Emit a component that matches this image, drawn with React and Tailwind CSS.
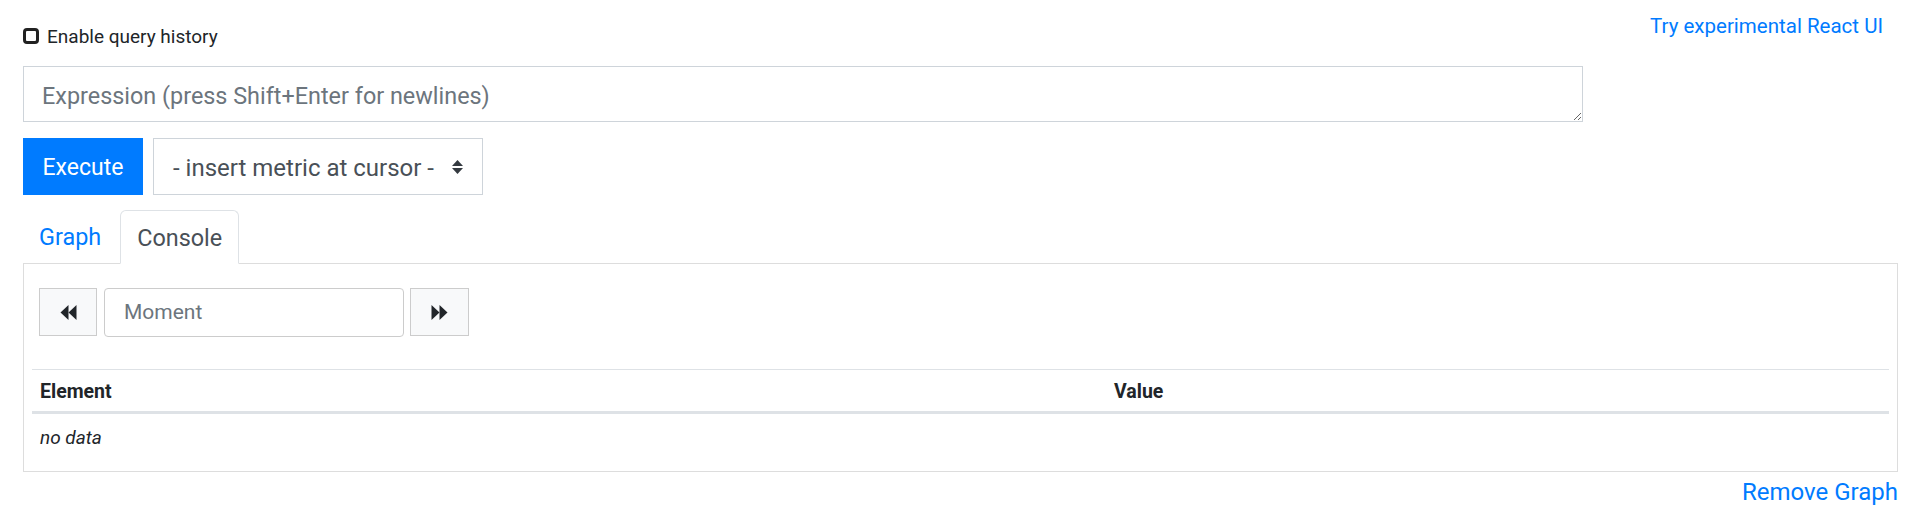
import React from "react";

function BackIcon() {
  return (
    <svg width="17" height="15" viewBox="0 0 17 15" fill="#212529">
      <path d="M8.5 0 L0.5 7.5 L8.5 15 Z" />
      <path d="M16.5 0 L8.5 7.5 L16.5 15 Z" />
    </svg>
  );
}

function FwdIcon() {
  return (
    <svg width="17" height="15" viewBox="0 0 17 15" fill="#212529">
      <path d="M0.5 0 L8.5 7.5 L0.5 15 Z" />
      <path d="M8.5 0 L16.5 7.5 L8.5 15 Z" />
    </svg>
  );
}

function SortIcon() {
  return (
    <svg width="11" height="14" viewBox="0 0 11 14" fill="#343a40">
      <path d="M5.5 0 L11 6 L0 6 Z" />
      <path d="M0 8 L11 8 L5.5 14 Z" />
    </svg>
  );
}

export default function App() {
  return (
    <div className="w-[1920px] h-[509px] bg-white pl-[23px] pr-[22px] font-['Roboto','Liberation_Sans',sans-serif] text-[#212529] overflow-hidden">
      {/* top row */}
      <div className="flex justify-between items-start">
        <div className="mt-[28px] flex items-center h-[16px] gap-[8px]">
          <div className="w-[16px] h-[16px] border-[3px] border-[#222] rounded-[4px] bg-white" />
          <span className="text-[19px] leading-[16px] pt-[1px]">Enable query history</span>
        </div>
        <a className="mt-[13px] mr-[15px] text-[20.5px] leading-[26px] text-[#007bff]">
          Try experimental React UI
        </a>
      </div>

      {/* expression */}
      <textarea
        className="block mt-[22px] w-[1560px] h-[56px] border border-[#ced4da] px-[18px] pt-[11px] pb-[7px] text-[23.4px] leading-[36px] text-[#495057] placeholder:text-[#6c757d] outline-none resize"
        placeholder="Expression (press Shift+Enter for newlines)"
      />

      {/* buttons */}
      <div className="mt-[16px] flex gap-[10px]">
        <div className="w-[120px] h-[57px] pt-[3px] bg-[#007bff] text-white text-[23px] flex items-center justify-center">
          Execute
        </div>
        <div className="w-[330px] h-[57px] border border-[#ced4da] bg-white flex items-center pl-[19px] text-[24px] text-[#495057]">
          <span className="pt-[3px]">- insert metric at cursor -</span>
          <span className="ml-auto mr-[19px] flex items-center">
            <SortIcon />
          </span>
        </div>
      </div>

      {/* tabs */}
      <div className="mt-[15px] flex items-end h-[53px]">
        <div className="h-[53px] pt-[3px] pl-[15px] pr-[18px] flex items-center text-[23.4px] text-[#007bff] border border-transparent">
          Graph
        </div>
        <div className="h-[54px] pt-[3px] -mb-px relative z-10 px-[16px] flex items-center text-[23.4px] text-[#495057] bg-white border border-[#dee2e6] border-b-white rounded-t-[6px]">
          Console
        </div>
      </div>

      {/* panel */}
      <div className="border border-[#dddddd] h-[209px] px-[8px]">
        <div className="mt-[23px] ml-[7px] flex items-center h-[50px]">
          <div className="w-[58px] h-[48px] bg-[#f8f9fa] border border-[#cccccc] flex items-center justify-center">
            <BackIcon />
          </div>
          <div className="ml-[7px] w-[300px] h-[49px] pt-[2px] border border-[#cccccc] rounded-[4px] flex items-center pl-[19px] text-[21px] text-[#6c757d]">
            Moment
          </div>
          <div className="ml-[6px] w-[59px] h-[48px] bg-[#f8f9fa] border border-[#cccccc] flex items-center justify-center">
            <FwdIcon />
          </div>
        </div>

        <div className="mt-[32px] border-t border-[#dee2e6]">
          <div className="grid grid-cols-[1074px_1fr] h-[44px] pt-[3px] items-center border-b-[3px] border-[#dee2e6] text-[19.5px] font-bold text-[#212529]">
            <div className="pl-[8px]">Element</div>
            <div className="pl-[8px]">Value</div>
          </div>
          <div className="h-[46px] pt-[2px] flex items-center pl-[8px] text-[19px] italic text-[#212529]">
            no data
          </div>
        </div>
      </div>

      <div className="mt-[2px] flex justify-end">
        <a className="text-[24px] leading-[36px] text-[#007bff]">Remove Graph</a>
      </div>
    </div>
  );
}
